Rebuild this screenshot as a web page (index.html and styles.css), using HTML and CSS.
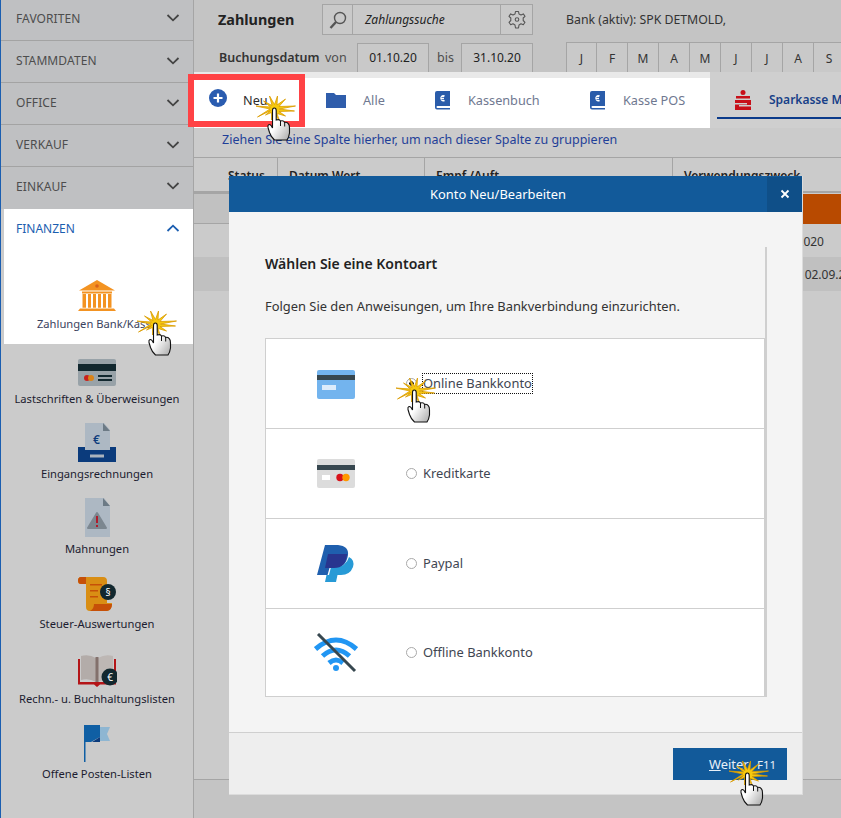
FILE: index.html
```html
<!DOCTYPE html>
<html lang="de">
<head>
<meta charset="utf-8">
<title>Zahlungen</title>
<link rel="stylesheet" href="styles.css">
</head>
<body>
<svg class="defs" width="0" height="0" aria-hidden="true">
  <defs>
    <linearGradient id="handFill" x1="0" y1="0" x2="1" y2="1">
      <stop offset="0.45" stop-color="#ffffff"/><stop offset="1" stop-color="#a9a9a9"/>
    </linearGradient>
    <symbol id="cursor" viewBox="0 0 44 46">
      <path transform="translate(-3.500 0)" d="M25 1 L24.500 10 L33 4 L26.500 11.500 L43 11 L27 14 L42 16 L26.500 16.500 L33 21 L24.500 18.500 L27 26 L22 18.500 L19 25 L19 17.500 L13 20 L18 15.500 L5 22 L17.500 14 L3 11 L18 12 L11 6 L19.500 10.500 L17 1 L22 9.500 Z" fill="#f6c90e" stroke="#d99a00" stroke-width=".8" stroke-linejoin="miter"/>
      <path d="M16.500 15.500 Q16.500 13 18.300 13 Q20.200 13 20.200 15.500 V25 Q23.500 23.800 24.500 26 Q27.500 25 28.700 27.500 Q31 26.500 32.500 29 Q33.500 30 33.500 33 V38 Q33 42 31 45 H18.500 Q15 42 13.500 37.500 L12 32.500 Q11.500 30 13 29.500 Q15 29.300 16.500 33 Z" fill="url(#handFill)" stroke="#111" stroke-width="1.100"/>
      <path d="M24.500 26 V31 M28.700 27.500 V31.500" fill="none" stroke="#111" stroke-width="1"/>
    </symbol>
    <symbol id="chev" viewBox="0 0 14 8"><path d="M1.500 1 L7 6.300 L12.500 1" fill="none" stroke="currentColor" stroke-width="1.800"/></symbol>
    <symbol id="book" viewBox="0 0 15 19">
      <path d="M2 0 H15 V15 H2.500 Q1.500 15 1.500 16 Q1.500 17 2.500 17 H15 V18.500 H2 Q0 18.500 0 16.500 V2 Q0 0 2 0 Z" fill="#2a5caa"/>
      <path d="M10 4.500 A3.200 3.200 0 1 0 10 10 L9 8.800 H6.500 V8 H9 V6.800 H6.500 V6 H9 Z" fill="#ffffff"/>
    </symbol>
  </defs>
</svg>

<div class="app">
  <aside class="sidebar">
    <div class="nav-row"><span>FAVORITEN</span><svg class="chev"><use href="#chev"/></svg></div>
    <div class="nav-row"><span>STAMMDATEN</span><svg class="chev"><use href="#chev"/></svg></div>
    <div class="nav-row"><span>OFFICE</span><svg class="chev"><use href="#chev"/></svg></div>
    <div class="nav-row"><span>VERKAUF</span><svg class="chev"><use href="#chev"/></svg></div>
    <div class="nav-row nav-row-last"><span>EINKAUF</span><svg class="chev"><use href="#chev"/></svg></div>

    <section class="nav-open">
      <div class="nav-open-head"><span>FINANZEN</span><svg class="chev chev-up"><use href="#chev"/></svg></div>
      <div class="nav-item nav-item-active">
        <svg class="nav-icon" viewBox="0 0 40 40">
          <path d="M20 7 L38 17.500 H2 Z M1 38 L3 35.500 H37 L39 38 Z" fill="#f39322"/>
          <path d="M5 18.500 H35 V20.500 H5 Z M5.500 21 H9 V34.800 H5.500 Z M11 21 H14 V34.800 H11 Z M16 21 H19 V34.800 H16 Z M21 21 H24 V34.800 H21 Z M26 21 H29 V34.800 H26 Z M31 21 H34.500 V34.800 H31 Z" fill="#f39322"/>
          <circle cx="20" cy="13" r="1.800" fill="#d9621a"/>
        </svg>
        <span class="nav-label nav-label-active">Zahlungen Bank/Kasse</span>
      </div>
    </section>

    <div class="nav-list">
      <div class="nav-item">
        <svg class="nav-icon" viewBox="0 0 40 40">
          <rect x="1" y="11" width="38" height="27" rx="2" fill="#98a2a8"/>
          <rect x="1" y="16" width="38" height="7" fill="#12282f"/>
          <circle cx="10" cy="30" r="3" fill="#c8201c"/><circle cx="14" cy="30" r="3" fill="#d98318"/>
          <path d="M21 27 H35 V29 H21 Z M21 31 H35 V33 H21 Z" fill="#12282f"/>
        </svg>
        <span class="nav-label">Lastschriften &amp; Überweisungen</span>
      </div>
      <div class="nav-item">
        <svg class="nav-icon" viewBox="0 0 40 40">
          <path d="M8 0 H27 L33 7 V27 H8 Z" fill="#adb8c3"/><path d="M26 0 L33 8 H26 Z" fill="#6c7a85"/>
          <text class="euro" x="16" y="21">€</text>
          <path d="M1 24 H8 V27 H33 V24 H39 V39 H1 Z" fill="#0b3b7c"/>
          <rect x="13" y="31.500" width="14" height="3" fill="#aab3bd"/>
        </svg>
        <span class="nav-label">Eingangsrechnungen</span>
      </div>
      <div class="nav-item">
        <svg class="nav-icon" viewBox="0 0 40 40">
          <path d="M8 0 H27 L33 8 V39 H8 Z" fill="#adb8c3"/><path d="M26 0 L33 8 H26 Z" fill="#6c7a85"/>
          <path d="M20 15 L29 30 H11 Z" fill="#7c8790" stroke="#7c8790" stroke-width="2" stroke-linejoin="round"/>
          <path d="M19 18 H21 V25 H19 Z M19 27 H21 V29 H19 Z" fill="#b01c2c"/>
        </svg>
        <span class="nav-label">Mahnungen</span>
      </div>
      <div class="nav-item">
        <svg class="nav-icon" viewBox="0 0 40 40">
          <path d="M4 4 H26 Q30 4 30 8 V30 H35 Q35 37 30 38 H13 Q9 38 9 34 V11 H4 Q1 11 1 7.500 Q1 4 4 4 Z" fill="#d98e14"/>
          <path d="M1 7.500 Q1 4 4 4 H9 V11 H4 Q1 11 1 7.500 Z M17 31 H35 Q35 37 30 38 H13 Q17 36 17 31 Z" fill="#c65008"/>
          <path d="M13 11 H25 V12.500 H13 Z M13 17 H21 V18.500 H13 Z M13 23 H21 V24.500 H13 Z" fill="#c65008"/>
          <circle cx="31" cy="19" r="8" fill="#12282f"/>
          <text class="para" x="31" y="22.500">§</text>
        </svg>
        <span class="nav-label">Steuer-Auswertungen</span>
      </div>
      <div class="nav-item">
        <svg class="nav-icon" viewBox="0 0 40 40">
          <path d="M1 11 H3 V34 H37 V11 H39 V36.500 H23 L20 39 L17 36.500 H1 Z" fill="#b41518"/>
          <path d="M4 8 Q12 6 19 10 V34 Q12 30 4 32 Z" fill="#b3aca9"/><path d="M21 10 Q28 6 36 8 V32 Q28 30 21 34 Z" fill="#bdb7b4"/>
          <rect x="18.500" y="9" width="3" height="25" fill="#83716c"/>
          <circle cx="33" cy="29" r="8.500" fill="#12282f"/>
          <text class="para" x="33" y="33">€</text>
        </svg>
        <span class="nav-label">Rechn.- u. Buchhaltungslisten</span>
      </div>
      <div class="nav-item">
        <svg class="nav-icon" viewBox="0 0 40 40">
          <path d="M23 4 H33 L30 11 L33 18 H23 Z" fill="#8eb6d2"/>
          <path d="M7 2 H23 V14 L14 19 H8.500 V39 H7 Z" fill="#0f5fa4"/>
          <path d="M23 14 L15 19 H23 Z" fill="#0b3b7c"/>
        </svg>
        <span class="nav-label">Offene Posten-Listen</span>
      </div>
    </div>
  </aside>

  <main class="main">
    <header class="head">
      <div class="head-row">
        <h1 class="title">Zahlungen</h1>
        <div class="search">
          <span class="search-btn">
            <svg class="s-icon" viewBox="0 0 20 20"><circle cx="12" cy="8" r="5.500" fill="none" stroke="#555" stroke-width="1.400"/><path d="M8 12 L2.500 18" stroke="#555" stroke-width="2.400"/></svg>
          </span>
          <span class="search-input">Zahlungssuche</span>
          <span class="search-btn search-btn-gear">
            <svg class="s-icon" viewBox="0 0 20 20"><path d="M8.500 1.500 H11.500 L12 4 L14 5 L16.300 3.900 L18 6.300 L16.200 8 V10.500 L18 12.300 L16.300 14.800 L14 13.800 L12 15 L11.500 18 H8.500 L8 15 L6 13.800 L3.700 14.800 L2 12.300 L3.800 10.500 V8 L2 6.300 L3.700 3.900 L6 5 L8 4 Z" fill="none" stroke="#555" stroke-width="1.100" stroke-linejoin="round"/><circle cx="10" cy="9.500" r="1.800" fill="none" stroke="#555" stroke-width="1.100"/></svg>
          </span>
        </div>
        <div class="bank-info">Bank (aktiv): SPK DETMOLD,</div>
      </div>
      <div class="head-row head-row-dates">
        <span class="date-label">Buchungsdatum</span>
        <span class="date-word date-word-von">von</span>
        <span class="date-box">01.10.20</span>
        <span class="date-word date-word-bis">bis</span>
        <span class="date-box">31.10.20</span>
        <div class="months">
          <span>J</span><span>F</span><span>M</span><span>A</span><span>M</span><span>J</span><span>J</span><span>A</span><span>S</span>
        </div>
      </div>
    </header>

    <div class="toolbar">
      <nav class="tools">
        <div class="tool tool-new">
          <svg class="plus" viewBox="0 0 18 18"><circle cx="9" cy="9" r="9" fill="#2a5cb0"/><path d="M9 4.500 V13.500 M4.500 9 H13.500" stroke="#fff" stroke-width="2.200"/></svg>
          <span class="tool-text-dark">Neu</span>
        </div>
        <div class="tool tool-all">
          <svg class="folder" viewBox="0 0 20 15"><path d="M0 0 H8 L10 2 H20 V15 H0 Z" fill="#2f5dab"/></svg>
          <span>Alle</span>
        </div>
        <div class="tool tool-book">
          <svg class="book"><use href="#book"/></svg>
          <span>Kassenbuch</span>
        </div>
        <div class="tool tool-pos">
          <svg class="book"><use href="#book"/></svg>
          <span>Kasse POS</span>
        </div>
      </nav>
      <div class="bank-tab">
        <svg class="spk" viewBox="0 0 16 20"><circle cx="8" cy="2.500" r="2.500" fill="#c8101a"/><path d="M1 6 H15 V8.500 H1 Z M0 10 H16 V15 H4 V16.500 H16 V20 H0 V14.500 H12 V13 H0 Z" fill="#c8101a"/></svg>
        <span>Sparkasse MT</span>
      </div>
    </div>

    <div class="group-hint">Ziehen Sie eine Spalte hierher, um nach dieser Spalte zu gruppieren</div>

    <div class="grid-head">
      <span class="col col-status">Status</span>
      <span class="col col-date">Datum Wert</span>
      <span class="col col-name">Empf./Auft.</span>
      <span class="col col-text">Verwendungszweck</span>
    </div>
    <div class="grid-filter"><span class="filter-cell"></span><span class="filter-orange"></span></div>
    <div class="grid-row"><span class="cell-a">30.09.2020</span></div>
    <div class="grid-row grid-row-alt"><span class="cell-b">02.09.2020</span></div>
    <div class="grid-fill"></div>
    <div class="status-bar"></div>
  </main>
</div>

<div class="red-frame"></div>

<section class="dialog">
  <header class="dialog-head">
    <span class="dialog-title">Konto Neu/Bearbeiten</span>
    <span class="dialog-close">
      <svg class="close-x" viewBox="0 0 10 10"><path d="M1.500 1.500 L8.500 8.500 M8.500 1.500 L1.500 8.500" stroke="#fff" stroke-width="1.800"/></svg>
    </span>
  </header>
  <div class="dialog-body">
    <div class="dialog-scroll">
      <h2 class="dialog-h">Wählen Sie eine Kontoart</h2>
      <p class="dialog-p">Folgen Sie den Anweisungen, um Ihre Bankverbindung einzurichten.</p>
      <div class="choices">
        <label class="choice">
          <span class="choice-icon">
            <svg class="c-svg" viewBox="0 0 40 30"><rect x="1" y="1" width="38" height="29" rx="2" fill="#73b4ee"/><rect x="1" y="6" width="38" height="5" fill="#37474f"/><rect x="6" y="16" width="14" height="5" fill="#dcecfb"/></svg>
          </span>
          <input class="radio" type="radio" name="art" checked>
          <span class="choice-focus">Online Bankkonto</span>
        </label>
        <label class="choice">
          <span class="choice-icon">
            <svg class="c-svg" viewBox="0 0 40 30"><rect x="1" y="0" width="38" height="29" rx="2" fill="#dcdcdc"/><rect x="1" y="6" width="38" height="5" fill="#37474f"/><rect x="6" y="16" width="8" height="5" fill="#fff"/><circle cx="24" cy="18.500" r="3.700" fill="#d8121a"/><circle cx="30" cy="18.500" r="3.700" fill="#ff9800"/></svg>
          </span>
          <input class="radio" type="radio" name="art">
          <span class="choice-text">Kreditkarte</span>
        </label>
        <label class="choice">
          <span class="choice-icon">
            <svg class="c-svg c-svg-pp" viewBox="0 0 38 38"><path d="M8 0 H21 Q32 1 31 10 Q29 23 17 23 H12.500 L10.500 30 H0 Z" fill="#1f5fae"/><path d="M12 30 L14 22 H18 Q29 22 32 12 Q38 15 36 22 Q33 30 24 30 H20.500 L19 37 H8 L9.500 30 Z" fill="#279ad6"/><path d="M11 9 H30 Q29 23 17 23 H12.500 L8 23 Z" fill="#28358f"/></svg>
          </span>
          <input class="radio" type="radio" name="art">
          <span class="choice-text">Paypal</span>
        </label>
        <label class="choice">
          <span class="choice-icon">
            <svg class="c-svg c-svg-wifi" viewBox="0 0 44 40">
              <path d="M1.500 16 Q22 -2 42.500 16" fill="none" stroke="#2196f3" stroke-width="5"/>
              <path d="M8.500 23 Q22 11 35.500 23" fill="none" stroke="#2196f3" stroke-width="5"/>
              <path d="M15 30 Q22 24 29 30" fill="none" stroke="#2196f3" stroke-width="5"/>
              <circle cx="22" cy="35" r="3" fill="#2196f3"/>
              <path d="M4 1 L41 38" stroke="#37474f" stroke-width="3"/>
            </svg>
          </span>
          <input class="radio" type="radio" name="art">
          <span class="choice-text">Offline Bankkonto</span>
        </label>
      </div>
    </div>
  </div>
  <footer class="dialog-foot">
    <button class="next" type="button"><span class="next-main"><u>W</u>eiter</span><span class="next-key">F11</span></button>
  </footer>
</section>

<svg class="cursor cursor-new"><use href="#cursor"/></svg>
<svg class="cursor cursor-pay"><use href="#cursor"/></svg>
<svg class="cursor cursor-radio"><use href="#cursor"/></svg>
<svg class="cursor cursor-next"><use href="#cursor"/></svg>
</body>
</html>
```

FILE: styles.css
```css
* { box-sizing: border-box; }
html, body { margin: 0; height: 100%; }
body {
  width: 841px;
  height: 818px;
  overflow: hidden;
  position: relative;
  font-family: "Noto Sans", "Open Sans", sans-serif;
  font-size: 12px;
  color: #222;
  background: #cbcbcb;
}
.defs { position: absolute; }
.app { display: flex; height: 818px; }

/* sidebar */
.sidebar {
  width: 194px;
  flex: none;
  border-left: 1px solid #1b5eb0;
  border-right: 1px solid #a5a5a5;
  background: #cbcbcb;
  display: flex;
  flex-direction: column;
}
.nav-row {
  height: 42px;
  display: flex;
  align-items: center;
  justify-content: space-between;
  padding: 0 13px 2px 15px;
  background: #bfc0c2;
  border-bottom: 1px solid #a3a3a3;
  color: #4d4d4d;
  letter-spacing: .1px;
}
.nav-row:first-child { height: 41px; padding-bottom: 4px; }
.nav-row-last { border-bottom: 0; padding-bottom: 4px; }
.chev { width: 14px; height: 8px; color: #444; }
.chev-up { transform: scaleY(-1); color: #1b5eb0; }
.nav-open {
  margin-left: 3px;
  background: #fff;
  height: 135px;
  margin-top: 0;
}
.nav-open-head {
  height: 38px;
  display: flex;
  align-items: center;
  justify-content: space-between;
  padding: 0 13px 0 12px;
  color: #1b5eb0;
}
.nav-item {
  height: 75px;
  display: flex;
  flex-direction: column;
  align-items: center;
  color: #1c1c30;
}
.nav-item-active { margin-top: 26px; margin-left: -3px; height: 60px; }
.nav-icon { width: 40px; height: 40px; flex: none; margin-bottom: 2px; }
.nav-label { line-height: 17px; white-space: nowrap; font-size: 11.200px; }
.nav-label-active { color: #3b4360; }
.nav-list { margin-top: 4px; }
.euro { font: 600 12px "Noto Sans", sans-serif; fill: #0b3b7c; }
.para { font: 10px "Noto Sans", sans-serif; fill: #fff; text-anchor: middle; }

/* main */
.main {
  flex: 1;
  min-width: 0;
  position: relative;
  display: flex;
  flex-direction: column;
  overflow: hidden;
}
.head { height: 72px; background: #c4c4c4; padding: 4px 0 0 24px; }
.head-row { display: flex; align-items: center; height: 31px; white-space: nowrap; }
.head-row > * { flex: none; }
.head-row-dates { margin-top: 7px; }
.title { margin: 0; width: 104px; font-size: 14.400px; font-weight: 700; color: #222; }
.search { display: flex; height: 31px; }
.search-btn {
  width: 31px;
  border: 1px solid #a5a5a5;
  display: flex;
  align-items: center;
  justify-content: center;
  background: #c9c9c9;
}
.search-btn-gear { width: 32px; border-left: 0; }
.s-icon { width: 20px; height: 20px; }
.search-input {
  width: 148px;
  border: 1px solid #a5a5a5;
  border-left: 0;
  padding-left: 12px;
  line-height: 30px;
  font-style: italic;
  background: #c9c9c9;
}
.bank-info { margin-left: 33px; color: #333; font-size: 12.300px; }
.date-label { font-weight: 600; width: 107px; padding-left: 1px; color: #333; font-size: 12.500px; }
.date-word { color: #4d4d4d; font-size: 12.500px; }
.date-word-von { width: 32px; }
.date-word-bis { width: 24px; margin-left: 8px; }
.date-box {
  width: 72px;
  height: 30px;
  border: 1px solid #a5a5a5;
  background: #c9c9c9;
  text-align: center;
  line-height: 28px;
  color: #222;
}
.months { display: flex; margin-left: 33px; }
.months span {
  width: 31px;
  height: 31px;
  flex: none;
  border: 1px solid #a5a5a5;
  border-left-width: 0;
  text-align: center;
  line-height: 31px;
  background: #c9c9c9;
  color: #333;
}
.months span:first-child { border-left-width: 1px; }

.toolbar { height: 56px; display: flex; background: #cfcfcf; }
.tools {
  width: 516px;
  flex: none;
  display: flex;
  background: #fff;
  border-top: 6px solid #e9e9e9;
  color: #6f7890;
  font-size: 12.700px;
}
.tool { display: flex; align-items: center; height: 44px; }
.tool-new { width: 110px; padding-left: 15px; gap: 16px; }
.tool-all { width: 131px; padding-left: 22px; gap: 17px; }
.tool-book { width: 155px; padding-left: 0; gap: 18px; }
.tool-pos { gap: 18px; }
.plus { width: 18px; height: 18px; margin-top: -4px; }
.folder { width: 20px; height: 15px; }
.book { width: 15px; height: 19px; }
.tool-text-dark { color: #2b2b2b; }
.bank-tab {
  flex: 1;
  margin-left: 7px;
  height: 41px;
  margin-top: 6px;
  display: flex;
  align-items: center;
  gap: 18px;
  padding: 4px 0 0 18px;
  border-bottom: 2px solid #0a3a8a;
  color: #173f88;
  font-weight: 600;
  white-space: nowrap;
  overflow: hidden;
}
.spk { width: 16px; height: 20px; flex: none; }
.red-frame {
  position: absolute;
  left: 188px;
  top: 74px;
  width: 117px;
  height: 53px;
  border: 6px solid #ff4245;
}
.group-hint {
  height: 30px;
  padding: 4px 0 0 28px;
  color: #1f3f98;
  border-bottom: 1px solid #a5a5a5;
  line-height: 16px;
  font-size: 12.500px;
}
.grid-head {
  height: 35px;
  display: flex;
  border-bottom: 2px solid #a5a5a5;
  color: #222;
  font-weight: 600;
}
.col { padding: 9px 0 0 11px; border-left: 1px solid #a5a5a5; white-space: nowrap; overflow: hidden; }
.col-status { width: 83px; padding-left: 34px; border-left: 0; }
.col-date { width: 147px; }
.col-name { width: 248px; }
.col-text { flex: 1; }
.grid-filter { height: 31px; display: flex; justify-content: space-between; }
.filter-cell { width: 36px; background: #c1c1c1; border: 1px solid #a5a5a5; border-left: 0; }
.filter-orange { width: 38px; background: #b84a00; height: 30px; margin-top: 1px; }
.grid-row { height: 33px; padding-top: 2px; white-space: nowrap; overflow: hidden; line-height: 31px; color: #333; display: flex; justify-content: flex-end; font-size: 12px; }
.grid-row-alt { background: #c0c0c0; height: 34px; }
.cell-a { padding-right: 17px; }
.cell-b { margin-right: -25px; }
.grid-fill { flex: 1; }
.status-bar { height: 39px; background: #c4c4c4; border-top: 1px solid #a5a5a5; }

/* dialog */
.dialog {
  position: absolute;
  left: 229px;
  top: 176px;
  width: 574px;
  height: 619px;
  background: #f4f4f4;
  display: flex;
  flex-direction: column;
  border-right: 1px solid #dcdcdc;
  border-bottom: 1px solid #dcdcdc;
}
.dialog-head {
  height: 36px;
  flex: none;
  display: flex;
  align-items: center;
  background: #125a9a;
  color: #fff;
}
.dialog-title { flex: 1; text-align: center; font-size: 12.900px; }
.dialog-close {
  width: 35px;
  height: 35px;
  display: flex;
  align-items: center;
  justify-content: center;
  background: #0f4f88;
}
.close-x { width: 10px; height: 10px; }
.dialog-body { flex: 1; min-height: 0; padding: 35px 36px 0; }
.dialog-scroll {
  width: 502px;
  height: 450px;
  border-right: 2px solid #cfcfcf;
  padding-top: 6px;
}
.dialog-h { margin: 0; font-size: 14px; font-weight: 600; line-height: 22px; color: #222; }
.dialog-p { margin: 22px 0 23px; line-height: 18px; font-size: 12.900px; color: #333; }
.choices { background: #fff; border: 1px solid #cfcfcf; height: 359px; }
.choice {
  height: 90px;
  display: flex;
  align-items: center;
  padding-left: 50px;
  border-bottom: 1px solid #cfcfcf;
  color: #3f4652;
  font-size: 12.900px;
}
.choice:last-child { border-bottom: 0; height: 87px; }
.choice-icon { width: 40px; display: flex; justify-content: center; margin-right: 50px; }
.choice-text { margin-top: -2px; }
.c-svg { width: 40px; height: 30px; }
.c-svg-pp { width: 38px; height: 38px; }
.c-svg-wifi { width: 44px; height: 40px; flex: none; }
.radio {
  appearance: none;
  width: 11px;
  height: 11px;
  margin: 0 6px 0 0;
  border: 1px solid #a9a9a9;
  border-radius: 50%;
  background: #fff;
  flex: none;
}
.radio:checked { background: radial-gradient(circle, #111 0 2px, #fff 2.500px); }
.choice-focus { outline: 1px dotted #111; outline-offset: 0; line-height: 19px; }
.dialog-foot {
  height: 62px;
  flex: none;
  background: #eeeeee;
  border-top: 1px solid #cfcfcf;
  padding: 15px 15px 0 0;
  display: flex;
  justify-content: flex-end;
}
.next {
  width: 114px;
  height: 32px;
  border: 0;
  background: #125a9a;
  color: #e8f0f8;
  font: 12.900px "Noto Sans", sans-serif;
  display: flex;
  align-items: center;
  padding: 0 0 0 36px;
}
.next-main { width: 48px; text-align: left; }
.next-key { font-size: 11.500px; }

/* pointer overlays */
.cursor { position: absolute; width: 44px; height: 46px; }
.cursor-new { left: 256px; top: 95px; }
.cursor-pay { left: 137px; top: 310px; }
.cursor-radio { left: 396px; top: 377px; }
.cursor-next { left: 729px; top: 760px; }
```
